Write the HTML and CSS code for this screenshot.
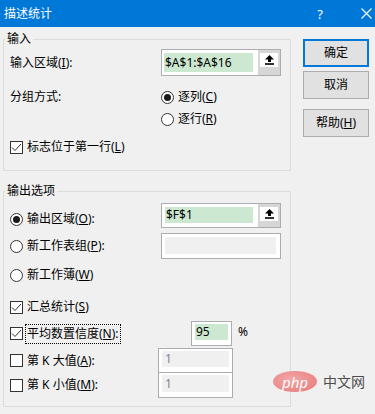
FILE: index.html
```html
<!DOCTYPE html>
<html lang="zh-CN">

<head>
    <meta charset="utf-8">
    <title>描述统计</title>
    <link rel="stylesheet" href="styles.css">
</head>

<body>
    <div class="titlebar">
        <span class="title">描述统计</span>
        <span class="help">?</span>
        <svg class="close" width="11" height="11" viewBox="0 0 11 11">
            <path d="M0.5 0.5 L10.5 10.5 M10.5 0.5 L0.5 10.5" stroke="#fff" stroke-width="1.1" fill="none" />
        </svg>
    </div>

    <div class="dialog">
        <div class="groups">
            <fieldset class="group group-input">
                <legend>输入</legend>

                <div class="row row-range">
                    <span class="label">输入区域(<u>I</u>):</span>
                    <div class="refbox">
                        <div class="field"><span class="value filled">$A$1:$A$16</span></div>
                        <div class="refbtn">
                            <span class="refbtn-face">
                                <svg width="9" height="10" viewBox="0 0 9 10">
                                    <path d="M4.5 0 L9 4.5 L6 4.5 L6 7 L3 7 L3 4.5 L0 4.5 Z" fill="#000" />
                                    <rect x="0" y="8.2" width="9" height="1.6" fill="#000" />
                                </svg>
                            </span>
                        </div>
                    </div>
                </div>

                <div class="row row-split">
                    <span class="label">分组方式:</span>
                    <span class="option"><span class="radio checked"></span><span>逐列(<u>C</u>)</span></span>
                </div>

                <div class="row row-split">
                    <span class="label"></span>
                    <span class="option"><span class="radio"></span><span>逐行(<u>R</u>)</span></span>
                </div>

                <div class="row row-header">
                    <span class="option"><span class="check checked"><svg width="11" height="11" viewBox="0 0 11 11"><path d="M1 5.5 L4 8.5 L10 2" stroke="#333" stroke-width="1" fill="none" /></svg></span><span>标志位于第一行(<u>L</u>)</span></span>
                </div>
            </fieldset>

            <fieldset class="group group-output">
                <legend>输出选项</legend>

                <div class="row row-out">
                    <span class="option option-low"><span class="radio checked"></span><span>输出区域(<u>O</u>):</span></span>
                    <div class="refbox">
                        <div class="field"><span class="value filled">$F$1</span></div>
                        <div class="refbtn">
                            <span class="refbtn-face">
                                <svg width="9" height="10" viewBox="0 0 9 10">
                                    <path d="M4.5 0 L9 4.5 L6 4.5 L6 7 L3 7 L3 4.5 L0 4.5 Z" fill="#000" />
                                    <rect x="0" y="8.2" width="9" height="1.6" fill="#000" />
                                </svg>
                            </span>
                        </div>
                    </div>
                </div>

                <div class="row row-sheet">
                    <span class="option"><span class="radio"></span><span>新工作表组(<u>P</u>):</span></span>
                    <div class="textbox textbox-sheet"><span class="value disabled"></span></div>
                </div>

                <div class="row row-book">
                    <span class="option"><span class="radio"></span><span>新工作薄(<u>W</u>)</span></span>
                </div>

                <div class="row row-summary">
                    <span class="option"><span class="check checked"><svg width="11" height="11" viewBox="0 0 11 11"><path d="M1 5.5 L4 8.5 L10 2" stroke="#333" stroke-width="1" fill="none" /></svg></span><span>汇总统计(<u>S</u>)</span></span>
                </div>

                <div class="row row-conf">
                    <span class="option"><span class="check checked"><svg width="11" height="11" viewBox="0 0 11 11"><path d="M1 5.5 L4 8.5 L10 2" stroke="#333" stroke-width="1" fill="none" /></svg></span><span class="focus">平均数置信度(<u>N</u>):</span></span>
                    <div class="textbox textbox-conf"><span class="value filled">95</span></div>
                    <span class="percent">%</span>
                </div>

                <div class="row row-k">
                    <span class="option"><span class="check"></span><span>第 K 大值(<u>A</u>):</span></span>
                    <div class="textbox textbox-k"><span class="value disabled">1</span></div>
                </div>

                <div class="row row-k row-k-last">
                    <span class="option"><span class="check"></span><span>第 K 小值(<u>M</u>):</span></span>
                    <div class="textbox textbox-k"><span class="value disabled">1</span></div>
                </div>
            </fieldset>
        </div>

        <div class="buttons">
            <button class="btn btn-default">确定</button>
            <button class="btn">取消</button>
            <button class="btn btn-help">帮助(<u>H</u>)</button>
        </div>
    </div>

    <div class="watermark">
        <span class="watermark-logo">php</span>
        <span class="watermark-text">中文网</span>
    </div>
</body>

</html>
```

FILE: styles.css
```css
:root {
    --bg-color: #f0f0f0;
    --title-color: #0078d7;
    --group-border: #dcdcdc;
    --box-border: #abadb3;
    --field-green: #cde8d0;
    --btn-bg: #e1e1e1;
    --btn-border: #adadad;
    --disabled-text: #7d8796;
}

* {
    margin: 0;
    padding: 0;
    box-sizing: border-box;
}

html,
body {
    font-family: 'Noto Sans', 'Noto Sans CJK SC', sans-serif;
    font-size: 12px;
    line-height: 14px;
    color: #000;
    background-color: var(--bg-color);
    width: 375px;
    height: 414px;
    overflow: hidden;
}

body {
    position: relative;
}

u {
    text-underline-offset: 1px;
}

.titlebar {
    height: 27px;
    background-color: var(--title-color);
    color: #fff;
    display: flex;
    align-items: center;
    padding: 0 3px 0 4px;
}

.title {
    flex-grow: 1;
}

.help {
    font-size: 13px;
    margin-right: 38px;
}

.close {
    display: block;
}

.dialog {
    display: flex;
    flex-direction: row;
    align-items: flex-start;
}

.groups {
    width: 288px;
    margin-left: 3px;
}

.group {
    border: 1px solid var(--group-border);
    margin: 0;
    padding: 0 0 0 6px;
}

.group legend {
    margin-left: -5px;
    padding: 0 2px;
    line-height: 14px;
}

.group-input {
    margin-top: 5px;
    padding-bottom: 12px;
}

.group-output {
    margin-top: 13px;
    padding-bottom: 8px;
}

.row {
    display: flex;
    flex-direction: row;
    align-items: center;
    height: 22px;
    white-space: nowrap;
}

.label {
    width: 151px;
    flex-shrink: 0;
}

.option {
    display: flex;
    align-items: center;
    gap: 4px;
}

.option-low {
    align-self: flex-end;
    margin-bottom: 2px;
    width: 151px;
}

.row-range {
    margin-top: 3px;
    height: 27px;
}

.row-range+.row-split {
    margin-top: 10px;
}

.row-header {
    margin-top: 6px;
}

.radio {
    width: 13px;
    height: 13px;
    border: 1px solid #333;
    border-radius: 50%;
    background: #fff;
    display: flex;
    align-items: center;
    justify-content: center;
    flex-shrink: 0;
}

.radio.checked::after {
    content: '';
    width: 7px;
    height: 7px;
    border-radius: 50%;
    background: #1a1a1a;
}

.check {
    width: 13px;
    height: 13px;
    border: 1px solid #333;
    background: #fff;
    display: flex;
    align-items: center;
    justify-content: center;
    flex-shrink: 0;
}

.check svg {
    display: block;
}

.refbox {
    width: 120px;
    height: 100%;
    border: 1px solid var(--box-border);
    background: #fff;
    display: flex;
    flex-direction: row;
}

.field {
    flex-grow: 1;
    padding: 3px 5px 3px 2px;
    display: flex;
}

.value {
    flex-grow: 1;
    display: flex;
    align-items: center;
    padding-left: 1px;
}

.value.filled {
    background: var(--field-green);
}

.value.disabled {
    background: var(--bg-color);
    color: var(--disabled-text);
    padding-left: 3px;
}

.refbtn {
    width: 22px;
    background: #d6d6d6;
    padding: 3px 2px 0 2px;
}

.refbtn-face {
    display: flex;
    align-items: center;
    justify-content: center;
    height: 14px;
    background: #fff;
}

.refbtn-face svg {
    display: block;
}

.row-out {
    margin-top: 5px;
    height: 25px;
}

.row-out .refbox .field {
    padding: 3px 5px 4px 3px;
}

.textbox {
    border: 1px solid var(--box-border);
    background: #fff;
    height: 100%;
    display: flex;
}

.row-sheet {
    margin-top: 5px;
    height: 26px;
}

.row-sheet .option {
    width: 151px;
}

.textbox-sheet {
    width: 120px;
    padding: 3px 4px 4px 3px;
}

.row-book {
    margin-top: 5px;
}

.row-summary {
    margin-top: 10px;
}

.row-conf {
    margin-top: 3px;
    height: 25px;
}

.row-conf .option {
    width: 181px;
}

.focus {
    outline: 1px dotted #000;
    outline-offset: 1px;
    padding: 1px 0;
}

.textbox-conf {
    width: 41px;
    padding: 2px 3px 5px 3px;
}

.percent {
    margin-left: 6px;
    margin-top: -3px;
}

.row-k {
    margin-top: 2px;
    height: 25px;
}

.row-k .option {
    width: 148px;
}

.row-k-last {
    margin-top: -1px;
    height: 26px;
}

.textbox-k {
    width: 75px;
    padding: 2px 3px 5px 3px;
}

.buttons {
    margin-left: 12px;
    padding-top: 12px;
    width: 66px;
    display: flex;
    flex-direction: column;
}

.btn {
    font-family: 'Noto Sans', 'Noto Sans CJK SC', sans-serif;
    font-size: 12px;
    line-height: 14px;
    height: 28px;
    background: var(--btn-bg);
    border: 1px solid var(--btn-border);
    color: #000;
}

.btn-default {
    border: 2px solid var(--title-color);
}

.btn+.btn {
    margin-top: 4px;
}

.btn-help {
    margin-top: 10px !important;
}

.watermark {
    position: absolute;
    left: 273px;
    top: 371px;
    display: flex;
    align-items: center;
    gap: 6px;
}

.watermark-logo {
    width: 44px;
    height: 21px;
    border-radius: 50%;
    background: radial-gradient(ellipse at 40% 40%, #f4a0a0, #e66a6a);
    color: #fff;
    font-size: 15px;
    font-style: italic;
    display: flex;
    align-items: center;
    justify-content: center;
    opacity: 0.9;
}

.watermark-text {
    color: #4d4d4d;
    font-size: 14px;
}
```
